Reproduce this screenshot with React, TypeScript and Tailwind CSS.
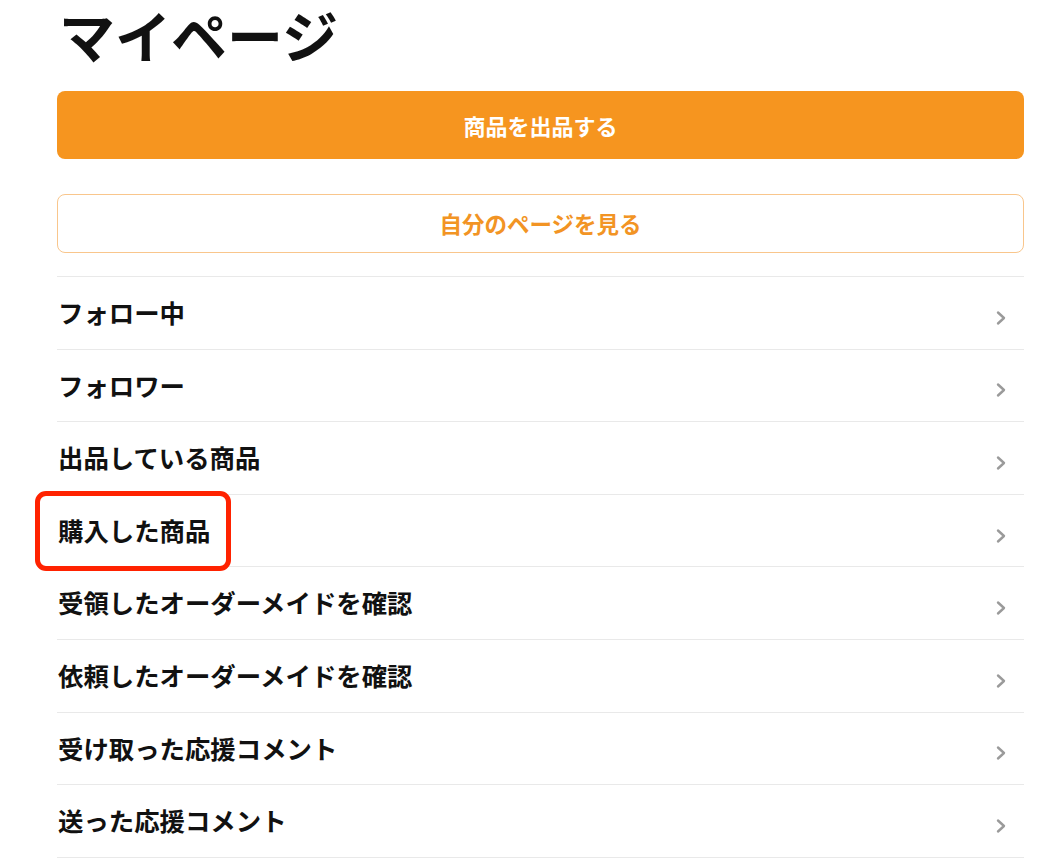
import React from 'react';

const items = [
  'フォロー中',
  'フォロワー',
  '出品している商品',
  '購入した商品',
  '受領したオーダーメイドを確認',
  '依頼したオーダーメイドを確認',
  '受け取った応援コメント',
  '送った応援コメント',
];

const Chevron: React.FC = () => (
  <svg width="12" height="16" viewBox="0 0 12 16" className="mt-[10px] mr-[17px]">
    <path d="M3 2.5 L9 8 L3 13.5" fill="none" stroke="#9a9a9a" strokeWidth="2.4" strokeLinecap="round" strokeLinejoin="round" />
  </svg>
);

const App: React.FC = () => {
  return (
    <div className="min-h-[865px] bg-white font-['Noto_Sans_CJK_JP','Noto_Sans',sans-serif] text-[#111]">
      <div className="ml-[57px] w-[967px] pt-[2px]">
        <h1 className="text-[56px] font-bold leading-[64px] pl-[2px]">マイページ</h1>

        <button className="mt-[25px] flex h-[68px] w-full items-center justify-center rounded-lg bg-[#F6951F] text-[22px] font-bold text-white">
          商品を出品する
        </button>

        <button className="mt-[35px] flex h-[59px] w-full items-center justify-center rounded-lg border border-[#F9C68C] bg-white text-[22.5px] font-bold text-[#F29424]">
          自分のページを見る
        </button>

        <ul className="mt-[23px] border-t border-[#e9e9e9]">
          {items.map((label, i) => (
            <li
              key={label}
              className="relative flex h-[72.6px] items-center justify-between border-b border-[#e9e9e9]"
            >
              <span className="pl-[1px] text-[25.4px] font-bold leading-none">{label}</span>
              <Chevron />
              {i === 3 && (
                <div className="pointer-events-none absolute left-[-22px] top-[-4px] h-[80px] w-[196px] rounded-[11px] border-[5px] border-[#FF2200]" />
              )}
            </li>
          ))}
        </ul>
      </div>
    </div>
  );
};

export default App;
